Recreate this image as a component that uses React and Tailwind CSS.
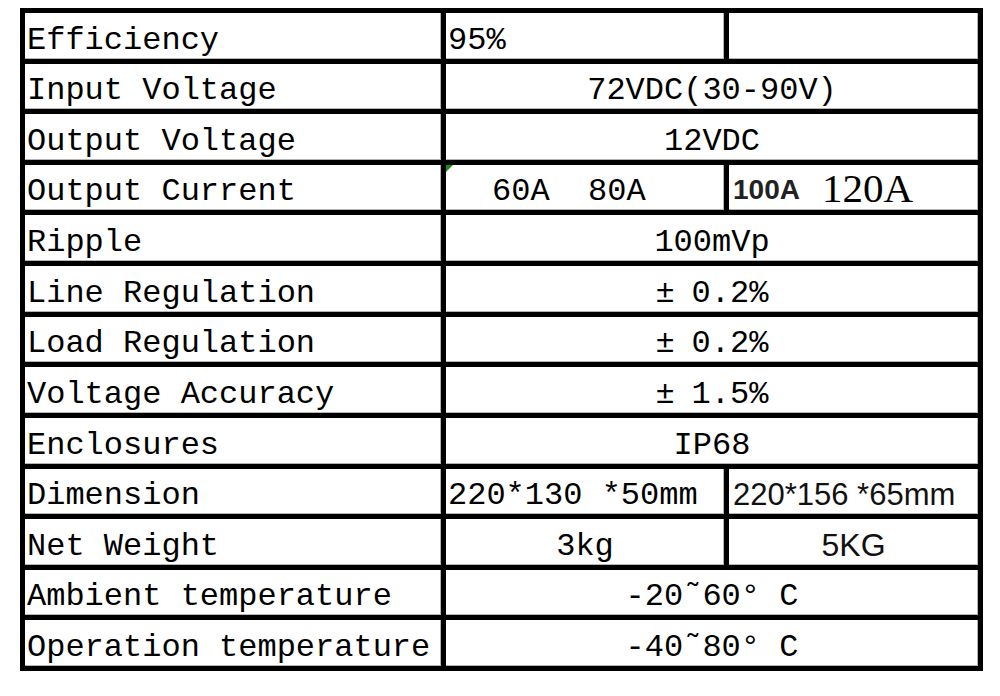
import React from "react";

const mono = { fontFamily: '"Liberation Mono", "DejaVu Sans Mono", monospace' };

const rows = [
  { label: "Efficiency", kind: "efficiency" },
  { label: "Input Voltage", value: "72VDC(30-90V)" },
  { label: "Output Voltage", value: "12VDC" },
  { label: "Output Current", kind: "current" },
  { label: "Ripple", value: "100mVp" },
  { label: "Line Regulation", value: "0.2%", pm: true },
  { label: "Load Regulation", value: "0.2%", pm: true },
  { label: "Voltage Accuracy", value: "1.5%", pm: true },
  { label: "Enclosures", value: "IP68" },
  { label: "Dimension", kind: "dimension" },
  { label: "Net Weight", kind: "weight" },
  { label: "Ambient temperature", value: "-20˜60° C" },
  { label: "Operation temperature", value: "-40˜80° C" },
];

const cell =
  "bg-white flex leading-[36px] whitespace-pre shadow-[inset_-1px_-1px_0_#b5b5b5]";

function Row({ row }) {
  const label = (
    <div className={`${cell} items-end pl-[2px] text-[32px] text-black`} style={mono}>
      {row.label}
    </div>
  );

  if (row.kind === "efficiency") {
    return (
      <>
        {label}
        <div className={`${cell} items-end pl-[2px] text-[32px]`} style={mono}>
          95%
        </div>
        <div className={cell} />
      </>
    );
  }

  if (row.kind === "current") {
    return (
      <>
        {label}
        <div className={`${cell} items-end relative pl-[46px] text-[32px]`} style={mono}>
          <span className="absolute left-0 top-0 h-0 w-0 border-t-[7px] border-r-[7px] border-t-[#1a8a1a] border-r-transparent" />
          60A  80A
        </div>
        <div className={`${cell} items-center pl-[4px]`}>
          <span className="font-['Liberation_Sans',Arial,sans-serif] font-bold text-[28px] leading-[32px] text-[#222] mt-[4px]">
            100A
          </span>
          <span className="ml-[22px] font-['Liberation_Serif','Times_New_Roman',serif] text-[41px] leading-[40px]">
            120A
          </span>
        </div>
      </>
    );
  }

  if (row.kind === "dimension") {
    return (
      <>
        {label}
        <div className={`${cell} items-end pl-[2px] text-[32px]`} style={mono}>
          220*130 *50mm
        </div>
        <div className={`${cell} items-end pl-[4px]`}>
          <span className="font-['Liberation_Sans',Arial,sans-serif] text-[31px] leading-[38px] text-[#111]">
            220*156 *65mm
          </span>
        </div>
      </>
    );
  }

  if (row.kind === "weight") {
    return (
      <>
        {label}
        <div className={`${cell} items-end justify-center text-[32px]`} style={mono}>
          3kg
        </div>
        <div className={`${cell} items-end justify-center`}>
          <span className="font-['Liberation_Sans',Arial,sans-serif] text-[32px] leading-[40px] text-[#111]">
            5KG
          </span>
        </div>
      </>
    );
  }

  return (
    <>
      {label}
      <div className={`${cell} items-end col-span-2 justify-center text-[32px]`} style={mono}>
        {row.pm && <span className="inline-block w-[36px]">±</span>}
        {row.value}
      </div>
    </>
  );
}

export default function App() {
  return (
    <div className="min-h-screen bg-white pt-[8px] pl-[20px]">
      <div className="grid h-[663px] w-[963px] grid-cols-[416px_278px_249px] grid-rows-[repeat(13,1fr)] gap-[5px] bg-black p-[5px]">
        {rows.map((row) => (
          <Row key={row.label} row={row} />
        ))}
      </div>
    </div>
  );
}
